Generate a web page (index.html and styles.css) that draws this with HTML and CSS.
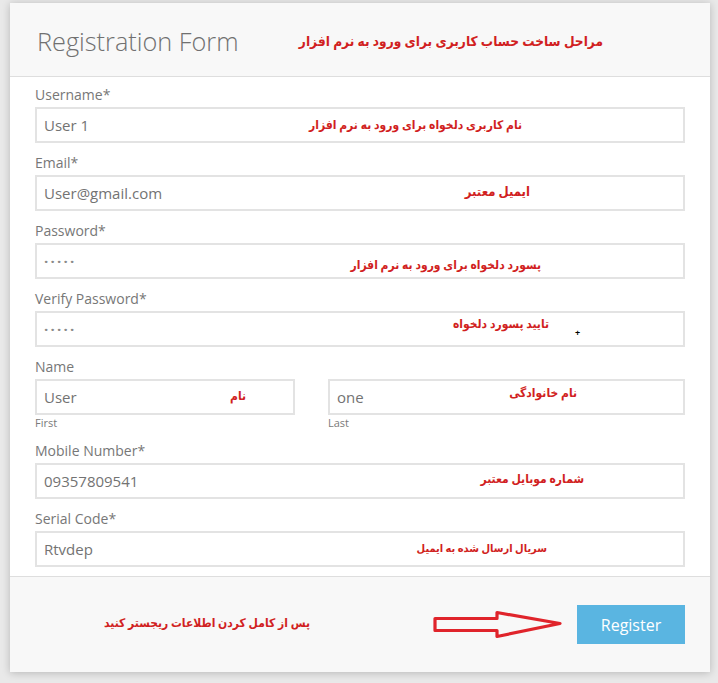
FILE: index.html
```html
<!DOCTYPE html>
<html lang="en">
<head>
<meta charset="UTF-8" />
<meta name="viewport" content="width=device-width, initial-scale=1" />
<title>Registration Form</title>
<link rel="stylesheet" href="styles.css">
</head>
<body>
<div class="card" role="main" aria-label="Registration Form">
  <div class="card-head">
    <h1>Registration Form</h1>
    <span class="note note-head" dir="rtl">مراحل ساخت حساب کاربری برای ورود به نرم افزار</span>
  </div>
  <form class="card-body" id="reg-form">
    <div class="group">
      <label for="username">Username*</label>
      <div class="box">
        <input type="text" id="username" value="User 1" />
        <span class="note note-user" dir="rtl">نام کاربری دلخواه برای ورود به نرم افزار</span>
      </div>
    </div>
    <div class="group">
      <label for="email">Email*</label>
      <div class="box">
        <input type="text" id="email" value="User@gmail.com" />
        <span class="note note-email" dir="rtl">ایمیل معتبر</span>
      </div>
    </div>
    <div class="group">
      <label for="password">Password*</label>
      <div class="box">
        <input type="text" id="password" class="dots" value="·····" />
        <span class="note note-pass" dir="rtl">پسورد دلخواه برای ورود به نرم افزار</span>
      </div>
    </div>
    <div class="group">
      <label for="verify">Verify Password*</label>
      <div class="box">
        <input type="text" id="verify" class="dots" value="·····" />
        <span class="note note-verify" dir="rtl">تایید پسورد دلخواه</span>
        <span class="cursor">+</span>
      </div>
    </div>
    <div class="group group-name">
      <label>Name</label>
      <div class="name-row">
        <div class="name-first">
          <div class="box">
            <input type="text" id="first" value="User" />
            <span class="note note-first" dir="rtl">نام</span>
          </div>
          <span class="sub">First</span>
        </div>
        <div class="name-last">
          <div class="box">
            <input type="text" id="last" value="one" />
            <span class="note note-last" dir="rtl">نام خانوادگی</span>
          </div>
          <span class="sub">Last</span>
        </div>
      </div>
    </div>
    <div class="group">
      <label for="mobile">Mobile Number*</label>
      <div class="box">
        <input type="text" id="mobile" value="09357809541" />
        <span class="note note-mobile" dir="rtl">شماره موبایل معتبر</span>
      </div>
    </div>
    <div class="group">
      <label for="serial">Serial Code*</label>
      <div class="box">
        <input type="text" id="serial" value="Rtvdep" />
        <span class="note note-serial" dir="rtl">سریال ارسال شده به ایمیل</span>
      </div>
    </div>
  </form>
  <div class="card-foot">
    <span class="note note-foot" dir="rtl">پس از کامل کردن اطلاعات ریجستر کنید</span>
    <svg class="arrow" width="132" height="30" viewBox="0 0 132 30" aria-hidden="true">
      <path d="M3 8.5 L65 8.5 L65 2.5 L128 13.5 L65 26.5 L65 20.5 L3 20.5 Z" fill="none" stroke="#e0242b" stroke-width="3.2" stroke-linejoin="round"/>
    </svg>
    <button type="submit" form="reg-form">Register</button>
  </div>
</div>
</body>
</html>
```

FILE: styles.css
```css
:root {
  --page-bg: #e9e9e9;
  --head-bg: #f8f8f8;
  --line: #dedede;
  --field-line: #e3e3e3;
  --text: #737373;
  --note-red: #d11f22;
  --btn-blue: #5ab5e1;
  --font-family: 'Open Sans', 'Liberation Sans', sans-serif;
  --note-font: 'DejaVu Sans Condensed', 'DejaVu Sans', sans-serif;
}
* {
  box-sizing: border-box;
}
body {
  margin: 0;
  padding: 3px 8px 10px 10px;
  background: var(--page-bg);
  font-family: var(--font-family);
  color: var(--text);
}
.card {
  position: relative;
  width: 700px;
  background: #fff;
  box-shadow: 0 1px 8px rgba(0,0,0,0.22);
}
.card-head {
  position: relative;
  height: 74px;
  background: var(--head-bg);
  border-bottom: 1px solid var(--line);
  padding: 21px 27px 0;
}
h1 {
  margin: 0;
  font-size: 25.3px;
  font-weight: 300;
  line-height: 34px;
  color: #707070;
}
.card-body {
  padding: 8px 25px 9px;
}
.group {
  margin-bottom: 10px;
}
.group:last-child {
  margin-bottom: 0;
}
.group-name {
  margin-bottom: 10px;
}
label {
  display: block;
  font-size: 14px;
  line-height: 20px;
  margin-bottom: 2px;
  color: #777;
}
.box {
  position: relative;
}
input[type="text"] {
  display: block;
  width: 100%;
  height: 36px;
  padding: 0 7px;
  border: 2px solid var(--field-line);
  background: #fff;
  font-family: var(--font-family);
  font-size: 15px;
  color: var(--text);
  outline: none;
}
input.dots {
  letter-spacing: 2.2px;
  font-weight: 700;
  color: #8a8a8a;
}
.name-row {
  display: flex;
  justify-content: space-between;
}
.name-first {
  width: 260px;
}
.name-last {
  width: 357px;
}
.sub {
  display: block;
  font-size: 11px;
  line-height: 16px;
  color: #7a7a7a;
}
.note {
  position: absolute;
  font-family: var(--note-font);
  font-weight: 700;
  font-size: 12px;
  line-height: 16px;
  word-spacing: -1px;
  color: var(--note-red);
  white-space: nowrap;
}
.note-head { right: 107px; top: 30px; font-size: 13.6px; }
.note-user { right: 163px; top: 10px; }
.note-email { right: 155px; top: 9px; font-size: 13px; }
.note-pass { right: 144px; top: 14px; }
.note-verify { right: 136px; top: 5px; }
.note-first { right: 49px; top: 9px; }
.note-last { right: 108px; top: 6px; }
.note-mobile { right: 101px; top: 8px; }
.note-serial { right: 138px; top: 10px; font-size: 11px; }
.cursor {
  position: absolute;
  left: 540px;
  top: 17px;
  font-size: 9px;
  line-height: 9px;
  font-weight: 700;
  color: #000;
}
.card-foot {
  position: relative;
  height: 96px;
  background: var(--head-bg);
  border-top: 1px solid var(--line);
  display: flex;
  justify-content: flex-end;
  align-items: center;
  padding: 0 25px;
}
.note-foot { right: 400px; top: 38px; }
.arrow {
  margin-right: 13px;
  margin-top: 0;
}
button {
  width: 108px;
  height: 39px;
  border: none;
  background: var(--btn-blue);
  color: #fff;
  font-family: var(--font-family);
  font-size: 16px;
  cursor: pointer;
}
```
